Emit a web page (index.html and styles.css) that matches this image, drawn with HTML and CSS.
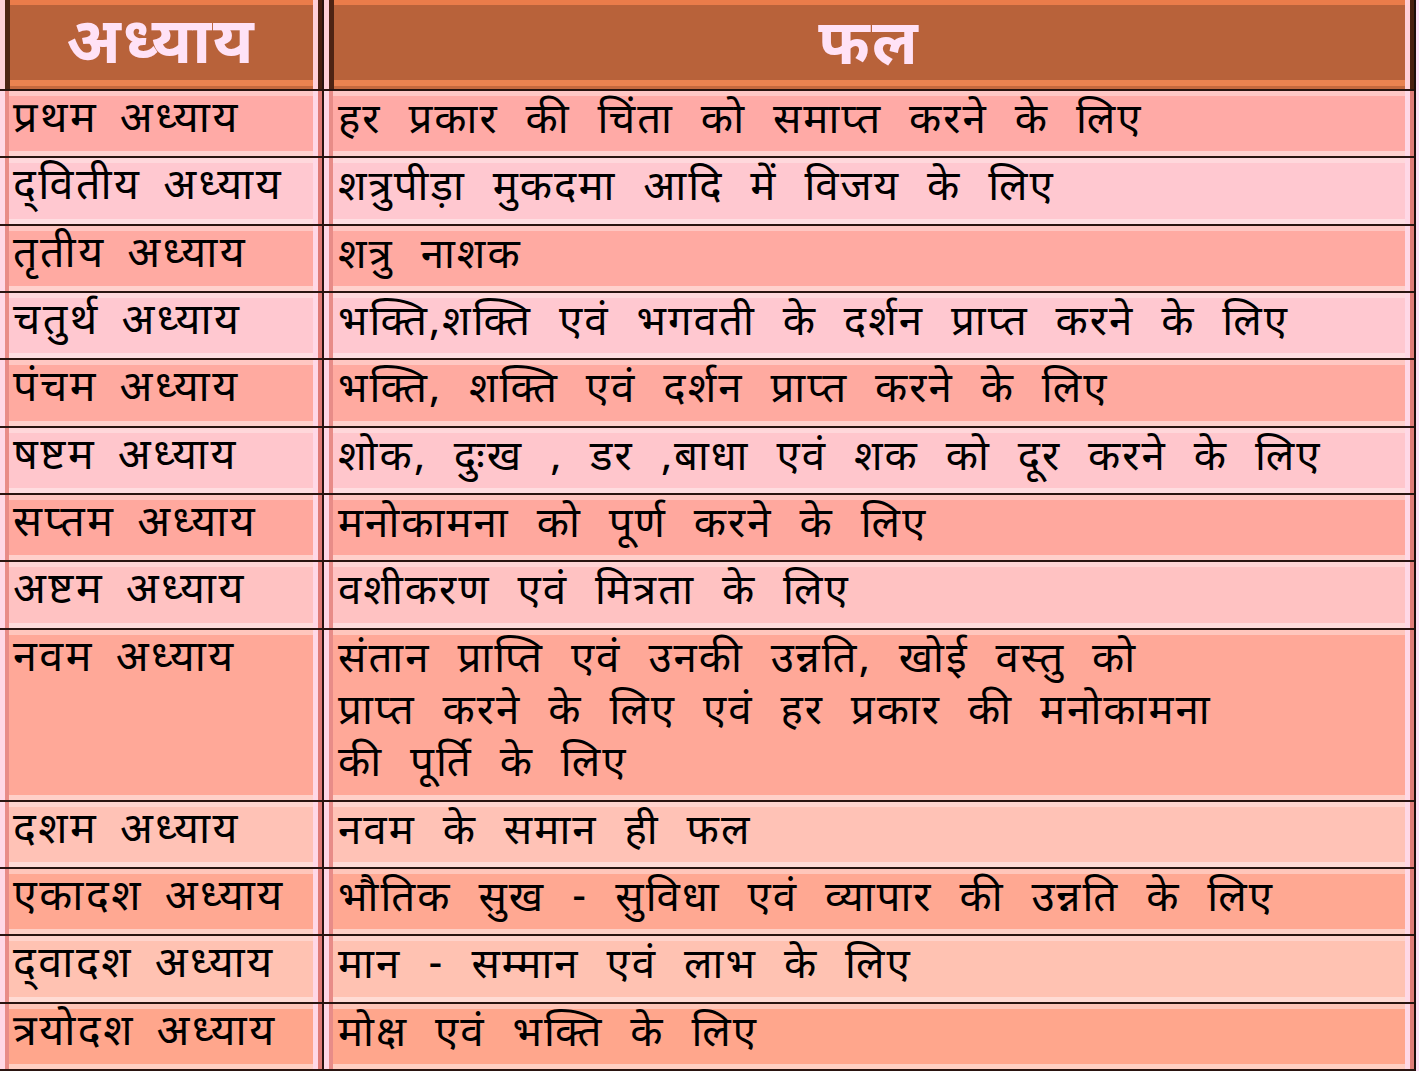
FILE: index.html
```html
<!DOCTYPE html>
<html lang="hi">
<head>
<meta charset="utf-8">
<title>अध्याय फल</title>
<link rel="stylesheet" href="styles.css">
</head>
<body>
<div class="table">
  <div class="row head">
    <div class="cell">अध्याय</div>
    <div class="cell">फल</div>
  </div>
  <div class="row r1"><div class="cell">प्रथम अध्याय</div><div class="cell">हर प्रकार की चिंता को समाप्त करने के लिए</div></div>
  <div class="row r2"><div class="cell">द्&zwnj;वितीय अध्याय</div><div class="cell">शत्रुपीड़ा मुकदमा आदि में विजय के लिए</div></div>
  <div class="row r3"><div class="cell">तृतीय अध्याय</div><div class="cell">शत्रु नाशक</div></div>
  <div class="row r4"><div class="cell">चतुर्थ अध्याय</div><div class="cell">भक्ति,शक्ति एवं भगवती के दर्शन प्राप्त करने के लिए</div></div>
  <div class="row r5"><div class="cell">पंचम अध्याय</div><div class="cell">भक्ति, शक्ति एवं दर्शन प्राप्त करने के लिए</div></div>
  <div class="row r6"><div class="cell">षष्टम अध्याय</div><div class="cell">शोक, दुःख , डर ,बाधा एवं शक को दूर करने के लिए</div></div>
  <div class="row r7"><div class="cell">सप्तम अध्याय</div><div class="cell">मनोकामना को पूर्ण करने के लिए</div></div>
  <div class="row r8"><div class="cell">अष्टम अध्याय</div><div class="cell">वशीकरण एवं मित्रता के लिए</div></div>
  <div class="row r9"><div class="cell">नवम अध्याय</div><div class="cell">संतान प्राप्ति एवं उनकी उन्नति, खोई वस्तु को<br>प्राप्त करने के लिए एवं हर प्रकार की मनोकामना<br>की पूर्ति के लिए</div></div>
  <div class="row r10"><div class="cell">दशम अध्याय</div><div class="cell">नवम के समान ही फल</div></div>
  <div class="row r11"><div class="cell">एकादश अध्याय</div><div class="cell">भौतिक सुख - सुविधा एवं व्यापार की उन्नति के लिए</div></div>
  <div class="row r12"><div class="cell">द्&zwnj;वादश अध्याय</div><div class="cell">मान - सम्मान एवं लाभ के लिए</div></div>
  <div class="row r13"><div class="cell">त्रयोदश अध्याय</div><div class="cell">मोक्ष एवं भक्ति के लिए</div></div>
</div>
</body>
</html>
```
FILE: styles.css
```css
html, body {
  margin: 0;
  padding: 0;
  background: #fde2f8;
}

body {
  font-family: "Noto Sans Devanagari", "Lohit Devanagari", "Noto Sans", sans-serif;
}

.table {
  width: 1414px;
  display: grid;
  grid-template-columns: 322px 1090px;
  grid-template-rows: 89px repeat(8, 65.33px) 170px repeat(4, 65.33px);
  gap: 2px;
  background: #2a1410;
  border-right: 2px solid #1e0e0a;
  border-bottom: 2px solid #2a1410;
}

.row {
  display: contents;
}

.cell {
  color: #000;
  font-size: 43px;
  line-height: 52px;
  letter-spacing: 2.5px;
  word-spacing: 8px;
  padding: 5px 0 0 13px;
  white-space: nowrap;
  box-shadow:
    inset 5px 0 0 #ffd8e6,
    inset 9px 0 0 #e88c88,
    inset -4px 0 0 #e07c78,
    inset -9px 0 0 #ffd8e6,
    inset 0 5px 0 rgba(255, 236, 236, 0.45),
    inset 0 -5px 0 rgba(255, 240, 240, 0.55);
}

.row .cell + .cell {
  font-size: 42px;
  padding-left: 14px;
  padding-top: 6px;
  letter-spacing: 2px;
  word-spacing: 14px;
}

.head .cell {
  background: #b8623a;
  color: #ffe2f6;
  font-weight: 700;
  font-size: 64px;
  line-height: 80px;
  letter-spacing: 2px;
  word-spacing: 0;
  padding: 8px 0 0 0;
  text-align: center;
  box-shadow:
    inset 5px 0 0 #ffd0d8,
    inset 10px 0 0 #4e2414,
    inset -4px 0 0 #4a2010,
    inset -9px 0 0 #ffd0d8,
    inset 0 5px 0 #ea7c4a,
    inset 0 -3px 0 #c4683e,
    inset 0 -9px 0 #ea8250;
}

.head .cell + .cell {
  font-size: 62px;
  padding-left: 0;
  padding-top: 9px;
  letter-spacing: 2px;
}

.r1 .cell { background: #ffaaa6; }
.r2 .cell { background: #ffc8d0; }
.r3 .cell { background: #ffaaa2; }
.r4 .cell { background: #ffc8d0; }
.r5 .cell { background: #ffaaa0; }
.r6 .cell { background: #ffc6cc; }
.r7 .cell { background: #ffa89e; }
.r8 .cell { background: #ffc2c2; }
.r9 .cell { background: #ffa898; }
.r10 .cell { background: #ffc2b6; }
.r11 .cell { background: #ffa892; }
.r12 .cell { background: #ffc2b2; }
.r13 .cell { background: #ffa68c; }
```
